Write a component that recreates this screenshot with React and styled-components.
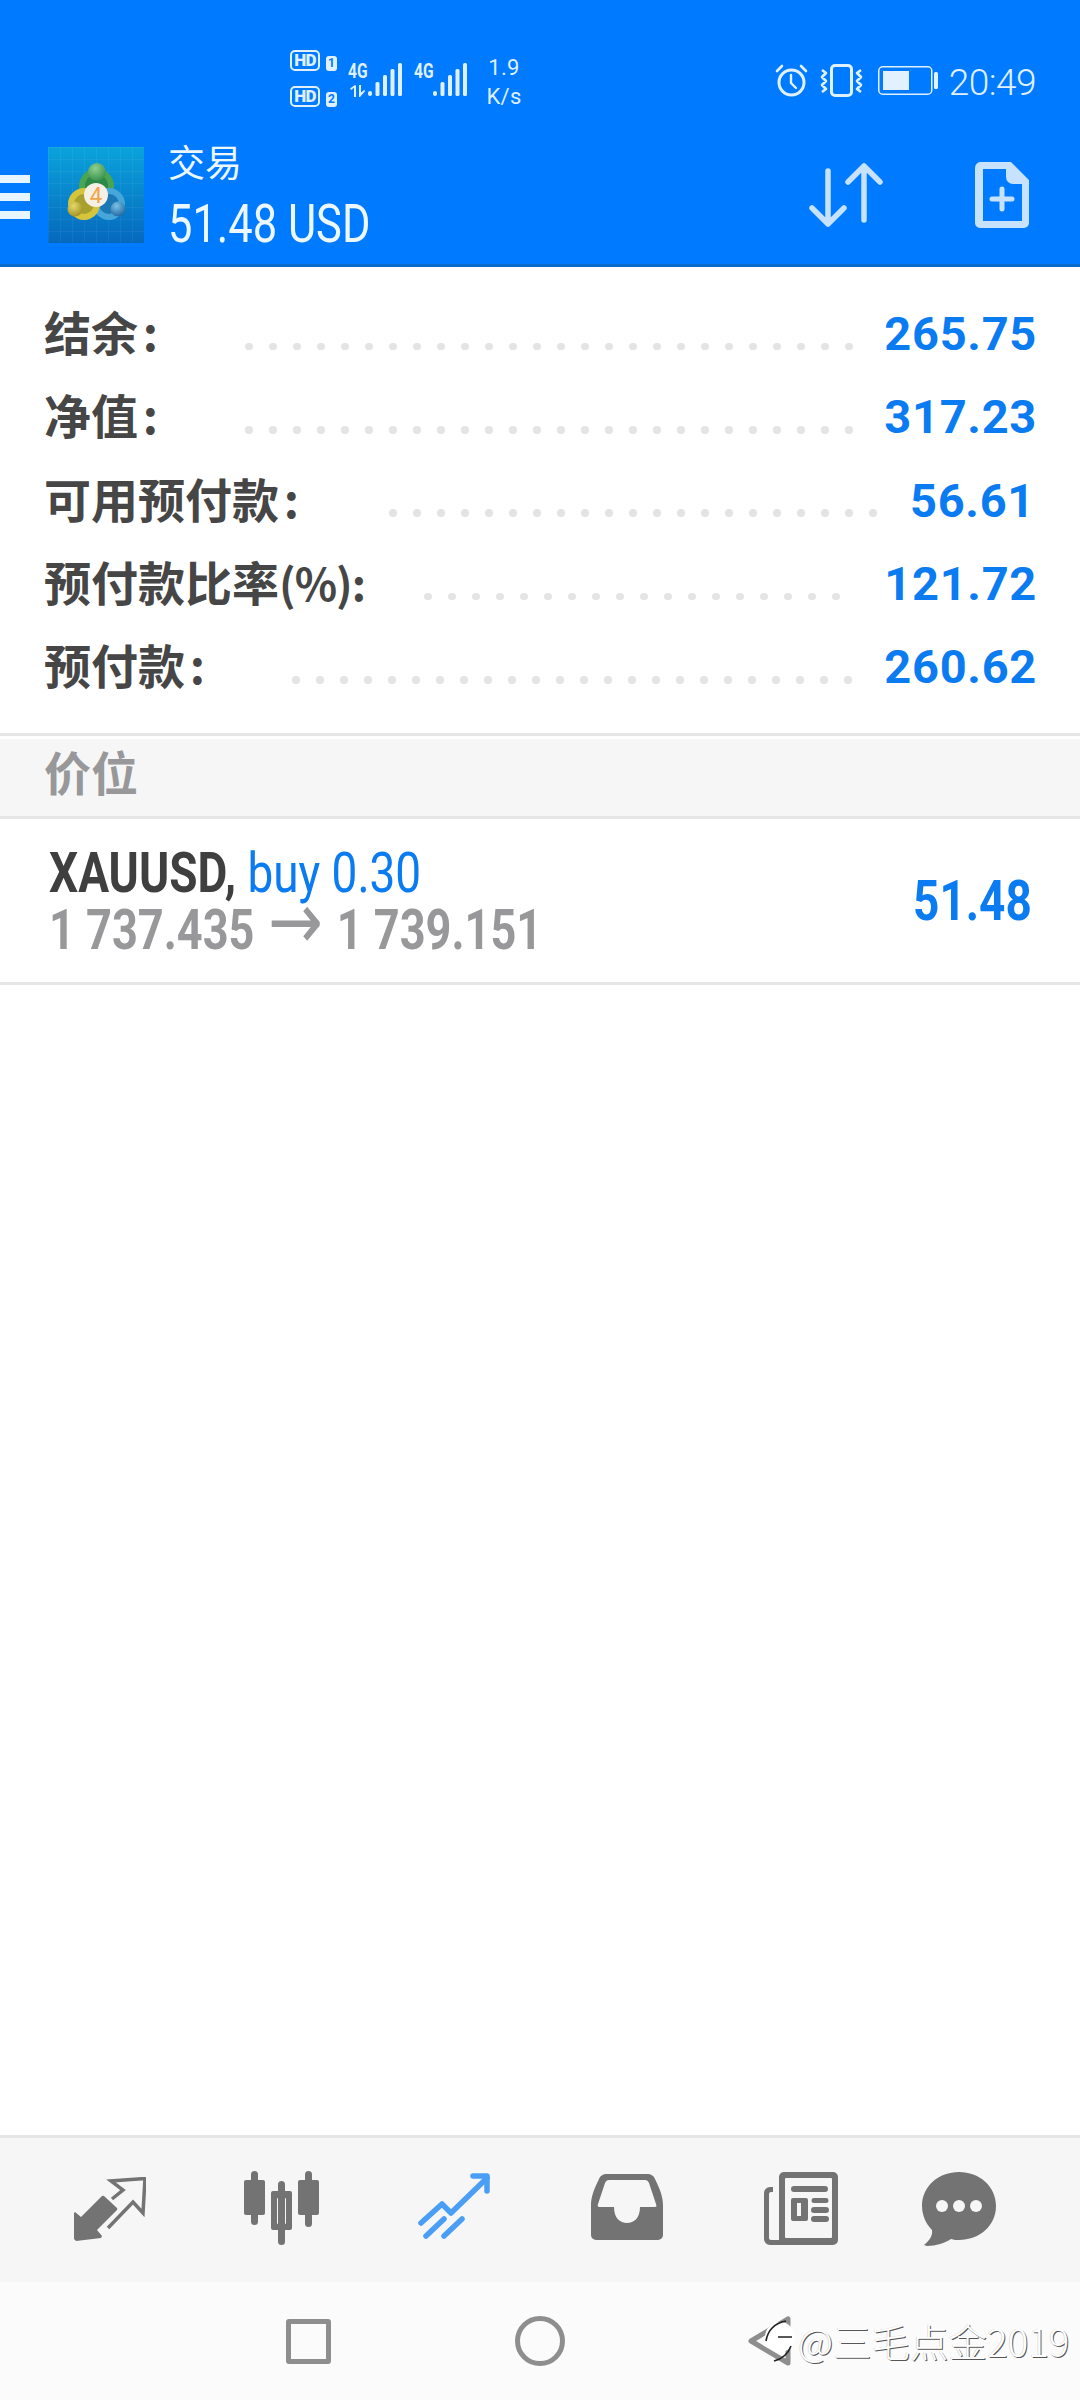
import React from 'react'
import styled, { createGlobalStyle } from 'styled-components'

const GlobalStyle = createGlobalStyle`
  html, body {
    margin: 0;
    padding: 0;
    background: #fff;
  }
  body {
    font-family: Roboto, "Noto Sans CJK SC", sans-serif;
  }
`

const Screen = styled.div`
  width: 1080px;
  height: 2400px;
  display: flex;
  flex-direction: column;
  background: #fff;
  overflow: hidden;
`

const Header = styled.header`
  height: 264px;
  background: #007aff;
  border-bottom: 3px solid #0a6cc8;
  flex-shrink: 0;
  display: flex;
  flex-direction: column;
`

const StatusBar = styled.div`
  height: 130px;
  padding: 50px 44px 0 290px;
  box-sizing: border-box;
  display: flex;
  align-items: flex-start;
  color: #dff0ff;
`

const SimColumn = styled.div`
  display: flex;
  flex-direction: column;
  gap: 15px;
  width: 58px;
`

const SimRow = styled.div`
  display: flex;
  align-items: flex-end;
  gap: 6px;
`

const HdBadge = styled.span`
  width: 30px;
  height: 21px;
  box-sizing: border-box;
  border: 2px solid #dff0ff;
  border-radius: 5px;
  font: 900 17px/17px Roboto, sans-serif;
  text-align: center;
  letter-spacing: -0.8px;
`

const SimNumber = styled.span`
  width: 11px;
  height: 15px;
  background: #dff0ff;
  color: #007aff;
  border-radius: 3px;
  font: 700 12px/15px Roboto, sans-serif;
  text-align: center;
`

const Signal = styled.div`
  display: flex;
  width: ${p => p.$width}px;
  margin-top: 13px;
`

const SignalType = styled.div`
  width: ${p => p.$width}px;
  display: flex;
  flex-direction: column;
`

const NetLabel = styled.span`
  font: 700 20px/17px Roboto, sans-serif;
  width: 20px;
  display: block;
  transform: scaleX(0.78);
  transform-origin: left center;
`

const Speed = styled.div`
  margin-left: 17px;
  margin-top: 3px;
  width: 38px;
  display: flex;
  flex-direction: column;
  align-items: center;
  font: 400 22px/29px Roboto, sans-serif;
  letter-spacing: 0.3px;
`

const StatusRight = styled.div`
  margin-left: auto;
  margin-top: 14px;
  display: flex;
  align-items: center;
  height: 33px;
`

const Clock = styled.span`
  margin-left: 11px;
  margin-top: 3px;
  font: 300 37px/33px Roboto, sans-serif;
  letter-spacing: -0.5px;
`

const AppBar = styled.div`
  flex: 1;
  display: flex;
  align-items: flex-start;
`

const MenuButton = styled.div`
  width: 30px;
  margin-top: 45px;
  display: flex;
  flex-direction: column;
  gap: 10px;
`

const MenuBar = styled.span`
  height: 8px;
  background: #e6f5ff;
`

const Logo = styled.svg`
  width: 96px;
  height: 96px;
  margin: 17px 0 0 18px;
  flex-shrink: 0;
`

const TitleBlock = styled.div`
  margin-left: 24px;
  width: 310px;
  color: #ecf7ff;
`

const Title = styled.div`
  font: 400 37px/44px "Noto Sans CJK SC", sans-serif;
  margin-top: 9px;
`

const Balance = styled.div`
  font: 400 53px/58px Roboto, sans-serif;
  white-space: nowrap;
  transform: scaleX(0.82);
  transform-origin: left center;
  margin-top: 12px;
`

const BarAction = styled.svg`
  flex-shrink: 0;
  margin-top: ${p => p.$top}px;
  margin-left: ${p => p.$left}px;
`

const Summary = styled.section`
  height: 469px;
  box-sizing: border-box;
  padding-top: 25px;
  border-bottom: 3px solid #e6e6e6;
  flex-shrink: 0;
`

const SummaryRow = styled.div`
  height: 83.3px;
  padding: 0 43px 0 44px;
  display: flex;
  align-items: center;
`

const Label = styled.span`
  flex: 0 0 ${p => p.$width}px;
  margin-bottom: 6px;
  font: 700 47px/1 "Noto Sans CJK SC", sans-serif;
  word-spacing: -6px;
  color: #464646;
  white-space: pre;
`

const LabelLatin = styled.span`
  font-size: 44px;
  letter-spacing: -1px;
`

const Leader = styled.div`
  display: flex;
  gap: 16.5px;
  margin-top: 26px;
`

const Dot = styled.span`
  width: 7.5px;
  height: 7.5px;
  border-radius: 50%;
  background: #e4e4e4;
`

const Value = styled.span`
  margin-left: auto;
  margin-right: ${p => p.$inset || 0}px;
  font: 700 47px/1 Roboto, sans-serif;
  color: #0a7bf0;
  letter-spacing: 0.7px;
`

const SectionTitle = styled.div`
  height: 77px;
  margin-top: 3px;
  padding-left: 44px;
  background: #f6f6f6;
  border-bottom: 3px solid #e6e6e6;
  font: 700 47px/64px "Noto Sans CJK SC", sans-serif;
  color: #98989a;
  flex-shrink: 0;
`

const PositionRow = styled.div`
  height: 163px;
  border-bottom: 3px solid #e6e6e6;
  display: flex;
  align-items: center;
  justify-content: space-between;
  padding: 0 48px 0 49px;
  flex-shrink: 0;
`

const PositionInfo = styled.div`
  display: flex;
  flex-direction: column;
  margin-top: 2px;
  transform: scaleX(0.82);
  transform-origin: left center;
  white-space: nowrap;
`

const Symbol = styled.div`
  font: 700 56px/57px Roboto, sans-serif;
  color: #3f3f3f;
`

const Side = styled.span`
  font-weight: 400;
  color: #0a7bf0;
`

const Prices = styled.div`
  font: 700 55px/57px Roboto, sans-serif;
  color: #98989a;
`

const PriceArrow = styled.span`
  margin: 0 3px;
  font: 400 80px/0 "DejaVu Sans", sans-serif;
`

const Profit = styled.span`
  font: 700 56px/1 Roboto, sans-serif;
  color: #0a7bf0;
  display: block;
  transform: scaleX(0.82);
  transform-origin: right center;
`

const Spacer = styled.div`
  flex: 1;
`

const TabBar = styled.nav`
  height: 111px;
  flex-shrink: 0;
  background: #f6f6f6;
  border-top: 3px solid #e6e6e6;
  padding-top: 33px;
  display: flex;
`

const Tab = styled.svg`
  flex-shrink: 0;
  margin-left: ${p => p.$left}px;
  margin-top: ${p => p.$top || 0}px;
`

const SystemNav = styled.div`
  height: 118px;
  flex-shrink: 0;
  background: #fbfbfb;
  display: flex;
  align-items: center;
  position: relative;
`

const SquareKey = styled.span`
  width: 45px;
  height: 45px;
  box-sizing: border-box;
  border: 5px solid #8e8e8e;
  border-radius: 3px;
  margin-left: 286px;
`

const CircleKey = styled.span`
  width: 50px;
  height: 50px;
  box-sizing: border-box;
  border: 5px solid #8e8e8e;
  border-radius: 50%;
  margin-left: 184px;
`

const BackKey = styled.svg`
  margin-left: 182px;
`

const Watermark = styled.div`
  position: absolute;
  left: 764px;
  top: 30px;
  display: flex;
  align-items: center;
  gap: 1px;
`

const WatermarkText = styled.span`
  font: 300 38.5px/56px "Noto Sans CJK SC", sans-serif;
  color: #fff;
  white-space: nowrap;
  text-shadow: 1px 1px 0 #555, -0.5px 0 0 #ccc;
`

const summary = [
  { label: '结余 :', width: 201, dots: 26, value: '265.75' },
  { label: '净值 :', width: 201, dots: 26, value: '317.23' },
  { label: '可用预付款 :', width: 345, dots: 21, value: '56.61', inset: 2 },
  { label: '预付款比率', latin: '(%):', width: 380, dots: 18, value: '121.72' },
  { label: '预付款 :', width: 248, dots: 24, value: '260.62' },
]

const MtLogo = () => (
  <Logo viewBox="0 0 96 96">
    <defs>
      <linearGradient id="logoBg" x1="0" y1="0" x2="0" y2="1">
        <stop offset="0" stopColor="#0aa3dc" />
        <stop offset="1" stopColor="#0668bd" />
      </linearGradient>
      <pattern id="logoGrid" width="12" height="12" patternUnits="userSpaceOnUse">
        <path d="M12 0H0V12" fill="none" stroke="#fff" strokeOpacity="0.09" strokeWidth="1" />
      </pattern>
      <radialGradient id="headGreen" cx="0.4" cy="0.3" r="0.8">
        <stop offset="0" stopColor="#8fd08f" />
        <stop offset="1" stopColor="#2f8a43" />
      </radialGradient>
      <radialGradient id="headYellow" cx="0.4" cy="0.3" r="0.8">
        <stop offset="0" stopColor="#e6d96a" />
        <stop offset="1" stopColor="#988a1e" />
      </radialGradient>
      <radialGradient id="headBlue" cx="0.4" cy="0.3" r="0.8">
        <stop offset="0" stopColor="#7cc2e6" />
        <stop offset="1" stopColor="#155f9a" />
      </radialGradient>
    </defs>
    <rect width="96" height="96" fill="url(#logoBg)" />
    <rect width="96" height="96" fill="url(#logoGrid)" />
    <circle cx="48.5" cy="39" r="14.5" fill="#2b8a49" stroke="#4aa552" strokeWidth="6" />
    <circle cx="61" cy="57" r="13" fill="#1a78b4" stroke="#46a6da" strokeWidth="6" />
    <circle cx="36" cy="57" r="13" fill="#a8a02c" stroke="#d4c53c" strokeWidth="6" />
    <circle cx="49" cy="25" r="9" fill="url(#headGreen)" />
    <circle cx="27" cy="62" r="7.5" fill="url(#headYellow)" />
    <circle cx="70" cy="62" r="7.5" fill="url(#headBlue)" />
    <circle cx="48" cy="48" r="12" fill="#f6efe4" />
    <text x="48" y="56" textAnchor="middle" fontFamily="Roboto, sans-serif" fontSize="22" fill="#f2a44a">4</text>
  </Logo>
)

const SignalBars = () => (
  <svg width="36" height="33" viewBox="0 0 36 33" fill="#dff0ff">
    <rect x="1" y="28" width="4" height="5" rx="2" />
    <rect x="8.5" y="19" width="4" height="14" rx="1.5" />
    <rect x="16" y="12" width="4" height="21" rx="1.5" />
    <rect x="23.5" y="6" width="4" height="27" rx="1.5" />
    <rect x="31" y="0" width="4" height="33" rx="1.5" />
  </svg>
)

const App = () => (
  <Screen>
    <GlobalStyle />
    <Header>
      <StatusBar>
        <SimColumn>
          <SimRow><HdBadge>HD</HdBadge><SimNumber>1</SimNumber></SimRow>
          <SimRow><HdBadge>HD</HdBadge><SimNumber>2</SimNumber></SimRow>
        </SimColumn>
        <Signal $width={66}>
          <SignalType $width={19}>
            <NetLabel>4G</NetLabel>
            <svg width="19" height="12" viewBox="0 0 19 12" fill="#dff0ff" style={{ marginTop: 5 }}>
              <path d="M6 12V2.5L3.5 5 2 3.6 7 0l1 .5V12zM11 0h2v7.5l3.5-2.8.5 1.6L12 12h-1z" />
            </svg>
          </SignalType>
          <SignalBars />
        </Signal>
        <Signal $width={54}>
          <SignalType $width={18}>
            <NetLabel>4G</NetLabel>
          </SignalType>
          <SignalBars />
        </Signal>
        <Speed><span>1.9</span><span>K/s</span></Speed>
        <StatusRight>
          <svg width="33" height="33" viewBox="0 0 33 33" fill="none" stroke="#dff0ff" strokeLinecap="round">
            <circle cx="16.5" cy="18.5" r="12.5" strokeWidth="3" />
            <path d="M16 11v8l5 5" strokeWidth="2.4" />
            <path d="M2 7l5-5M31 7l-5-5" strokeWidth="2.6" />
          </svg>
          <svg width="43" height="33" viewBox="0 0 43 33" fill="none" stroke="#dff0ff" strokeLinejoin="round" style={{ marginLeft: 12 }}>
            <rect x="11.5" y="1.5" width="20" height="30" rx="3.5" strokeWidth="3" />
            <path d="M2 6l4 3-4 4 4 4-4 4 4 4-4 3M41 6l-4 3 4 4-4 4 4 4-4 4 4 3" strokeWidth="2.6" />
          </svg>
          <svg width="60" height="29" viewBox="0 0 60 29" style={{ marginLeft: 15 }}>
            <rect x="0.75" y="0.75" width="53" height="27.5" rx="4" fill="none" stroke="#dff0ff" strokeWidth="1.5" />
            <rect x="5" y="5" width="26" height="19" fill="#e2f1ff" />
            <rect x="56" y="6" width="4" height="17" rx="1.5" fill="#dff0ff" />
          </svg>
          <Clock>20:49</Clock>
        </StatusRight>
      </StatusBar>
      <AppBar>
        <MenuButton><MenuBar /><MenuBar /><MenuBar /></MenuButton>
        <MtLogo />
        <TitleBlock>
          <Title>交易</Title>
          <Balance>51.48 USD</Balance>
        </TitleBlock>
        <BarAction $top={33} $left={331} width="74" height="64" viewBox="0 0 74 64" fill="none" stroke="#c6e2ff" strokeWidth="5.5" strokeLinecap="round" strokeLinejoin="round">
          <path d="M19 8v53M3 45l16 16 16-16" />
          <path d="M55 3v54M39 19L55 3l16 16" />
        </BarAction>
        <BarAction $top={32} $left={92} width="54" height="66" viewBox="0 0 54 66">
          <path fillRule="evenodd" fill="#c6e2ff" d="M7 0h29l18 18v43a5 5 0 0 1-5 5H5a5 5 0 0 1-5-5V6a6 6 0 0 1 7-6zm1 7v52h39V22H38a7 7 0 0 1-7-7V7z" />
          <path d="M27 27v20M17 37h20" stroke="#c6e2ff" strokeWidth="5" strokeLinecap="round" />
        </BarAction>
      </AppBar>
    </Header>

    <Summary>
      {summary.map(row => (
        <SummaryRow key={row.label}>
          <Label $width={row.width}>
            {row.label}
            {row.latin && <LabelLatin>{row.latin}</LabelLatin>}
          </Label>
          <Leader>
            {Array.from({ length: row.dots }, (_, i) => <Dot key={i} />)}
          </Leader>
          <Value $inset={row.inset}>{row.value}</Value>
        </SummaryRow>
      ))}
    </Summary>

    <SectionTitle>价位</SectionTitle>

    <PositionRow>
      <PositionInfo>
        <Symbol>XAUUSD, <Side>buy 0.30</Side></Symbol>
        <Prices>1 737.435 <PriceArrow>→</PriceArrow> 1 739.151</Prices>
      </PositionInfo>
      <Profit>51.48</Profit>
    </PositionRow>

    <Spacer />

    <TabBar>
      <Tab $left={74} $top={6} width="72" height="64" viewBox="0 0 72 64">
        <path fill="#737373" d="M0 36l1-1 6 5 21-21a2 2 0 0 1 2 0l13 12a2 2 0 0 1 0 2L23 53l5 6-1 2-25 3-2-2z" />
        <path fill="none" stroke="#737373" strokeWidth="3.5" strokeLinejoin="miter" d="M38 22l11-9L37 4l34-2.5L69 36 59 25 34 51" />
      </Tab>
      <Tab $left={98} $top={0} width="75" height="74" viewBox="0 0 75 74" fill="#737373">
        <rect x="7" y="0" width="7" height="54" rx="3.5" />
        <rect x="0" y="9" width="21" height="35" rx="2" />
        <rect x="61" y="0" width="7" height="56" rx="3.5" />
        <rect x="54" y="9" width="21" height="35" rx="2" />
        <rect x="34" y="10" width="7" height="64" rx="3.5" />
        <path fillRule="evenodd" d="M29 20h17a2 2 0 0 1 2 2v35a2 2 0 0 1-2 2H29a2 2 0 0 1-2-2V22a2 2 0 0 1 2-2zm5 7a1 1 0 0 0-1 1v24a1 1 0 0 0 1 1h7a1 1 0 0 0 1-1V28a1 1 0 0 0-1-1z" />
      </Tab>
      <Tab $left={99} $top={2} width="72" height="68" viewBox="0 0 72 68" fill="none" stroke="#4a9ef5" strokeWidth="5.5" strokeLinecap="round" strokeLinejoin="round">
        <path d="M3 50l21-19 9 9L69 5" />
        <path d="M55 3h14v15" />
        <path d="M26 46L8 63M44 46L26 63" />
      </Tab>
      <Tab $left={101} $top={3} width="72" height="66" viewBox="0 0 72 66">
        <path fill="#737373" fillRule="evenodd" d="M16 0h40c4 0 7 2 8 5 5 10 8 18 8 26v30a5 5 0 0 1-5 5H5a5 5 0 0 1-5-5V31c0-8 3-16 8-26 1-3 4-5 8-5zm2 6c-2 0-3 1-4 3L7 30c-1 3 1 3 2 3h14c0 11 6 16 13 16s13-5 13-16h14c2 0 3 0 2-3L58 9c-1-2-2-3-4-3z" />
      </Tab>
      <Tab $left={101} $top={1} width="74" height="73" viewBox="0 0 74 73" fill="#737373">
        <path fillRule="evenodd" d="M20 0h49a5 5 0 0 1 5 5v63a5 5 0 0 1-5 5H6a6 6 0 0 1-6-6V21a6 6 0 0 1 6-6h3v5H7a2 2 0 0 0-2 2v44a2 2 0 0 0 2 2h8V5a5 5 0 0 1 5-5zm2 6a1 1 0 0 0-1 1v58a1 1 0 0 0 1 1h45a1 1 0 0 0 1-1V7a1 1 0 0 0-1-1z" />
        <path d="M30 14h31a3 3 0 0 1 0 6H30a3 3 0 0 1 0-6zM50 26h12a2.5 2.5 0 0 1 0 5H50a2.5 2.5 0 0 1 0-5zM50 35h12a3 3 0 0 1 0 6H50a3 3 0 0 1 0-6zM50 44h12a3 3 0 0 1 0 6H50a3 3 0 0 1 0-6z" />
        <path fillRule="evenodd" d="M29 26h13a2 2 0 0 1 2 2v19a2 2 0 0 1-2 2H29a2 2 0 0 1-2-2V28a2 2 0 0 1 2-2zm4 5v13h4V31z" />
      </Tab>
      <Tab $left={84} $top={1} width="74" height="74" viewBox="0 0 74 74">
        <path fill="#737373" d="M37 0c20 0 37 14 37 34S57 68 37 68c-3 0-5 0-8-1-6 4-15 7-24 7l-3-1c5-4 9-9 8-15C4 52 0 43 0 34 0 14 17 0 37 0z" />
        <circle cx="20" cy="34" r="6" fill="#f6f6f6" />
        <circle cx="37" cy="34" r="6" fill="#f6f6f6" />
        <circle cx="54" cy="34" r="6" fill="#f6f6f6" />
      </Tab>
    </TabBar>

    <SystemNav>
      <SquareKey />
      <CircleKey />
      <BackKey width="45" height="50" viewBox="0 0 45 50" fill="none" stroke="#8e8e8e" strokeWidth="5" strokeLinejoin="round">
        <path d="M4 25L41 3v44z" />
      </BackKey>
      <Watermark>
        <svg width="33" height="50" viewBox="0 0 33 50">
          <ellipse cx="16" cy="22" rx="15" ry="15" fill="#fff" />
          <path d="M2 26C4 14 12 8 22 6M10 46c8-2 14-7 17-15M14 22h14" fill="none" stroke="#222" strokeWidth="1.6" />
        </svg>
        <WatermarkText>@三毛点金2019</WatermarkText>
      </Watermark>
    </SystemNav>
  </Screen>
)

export default App
